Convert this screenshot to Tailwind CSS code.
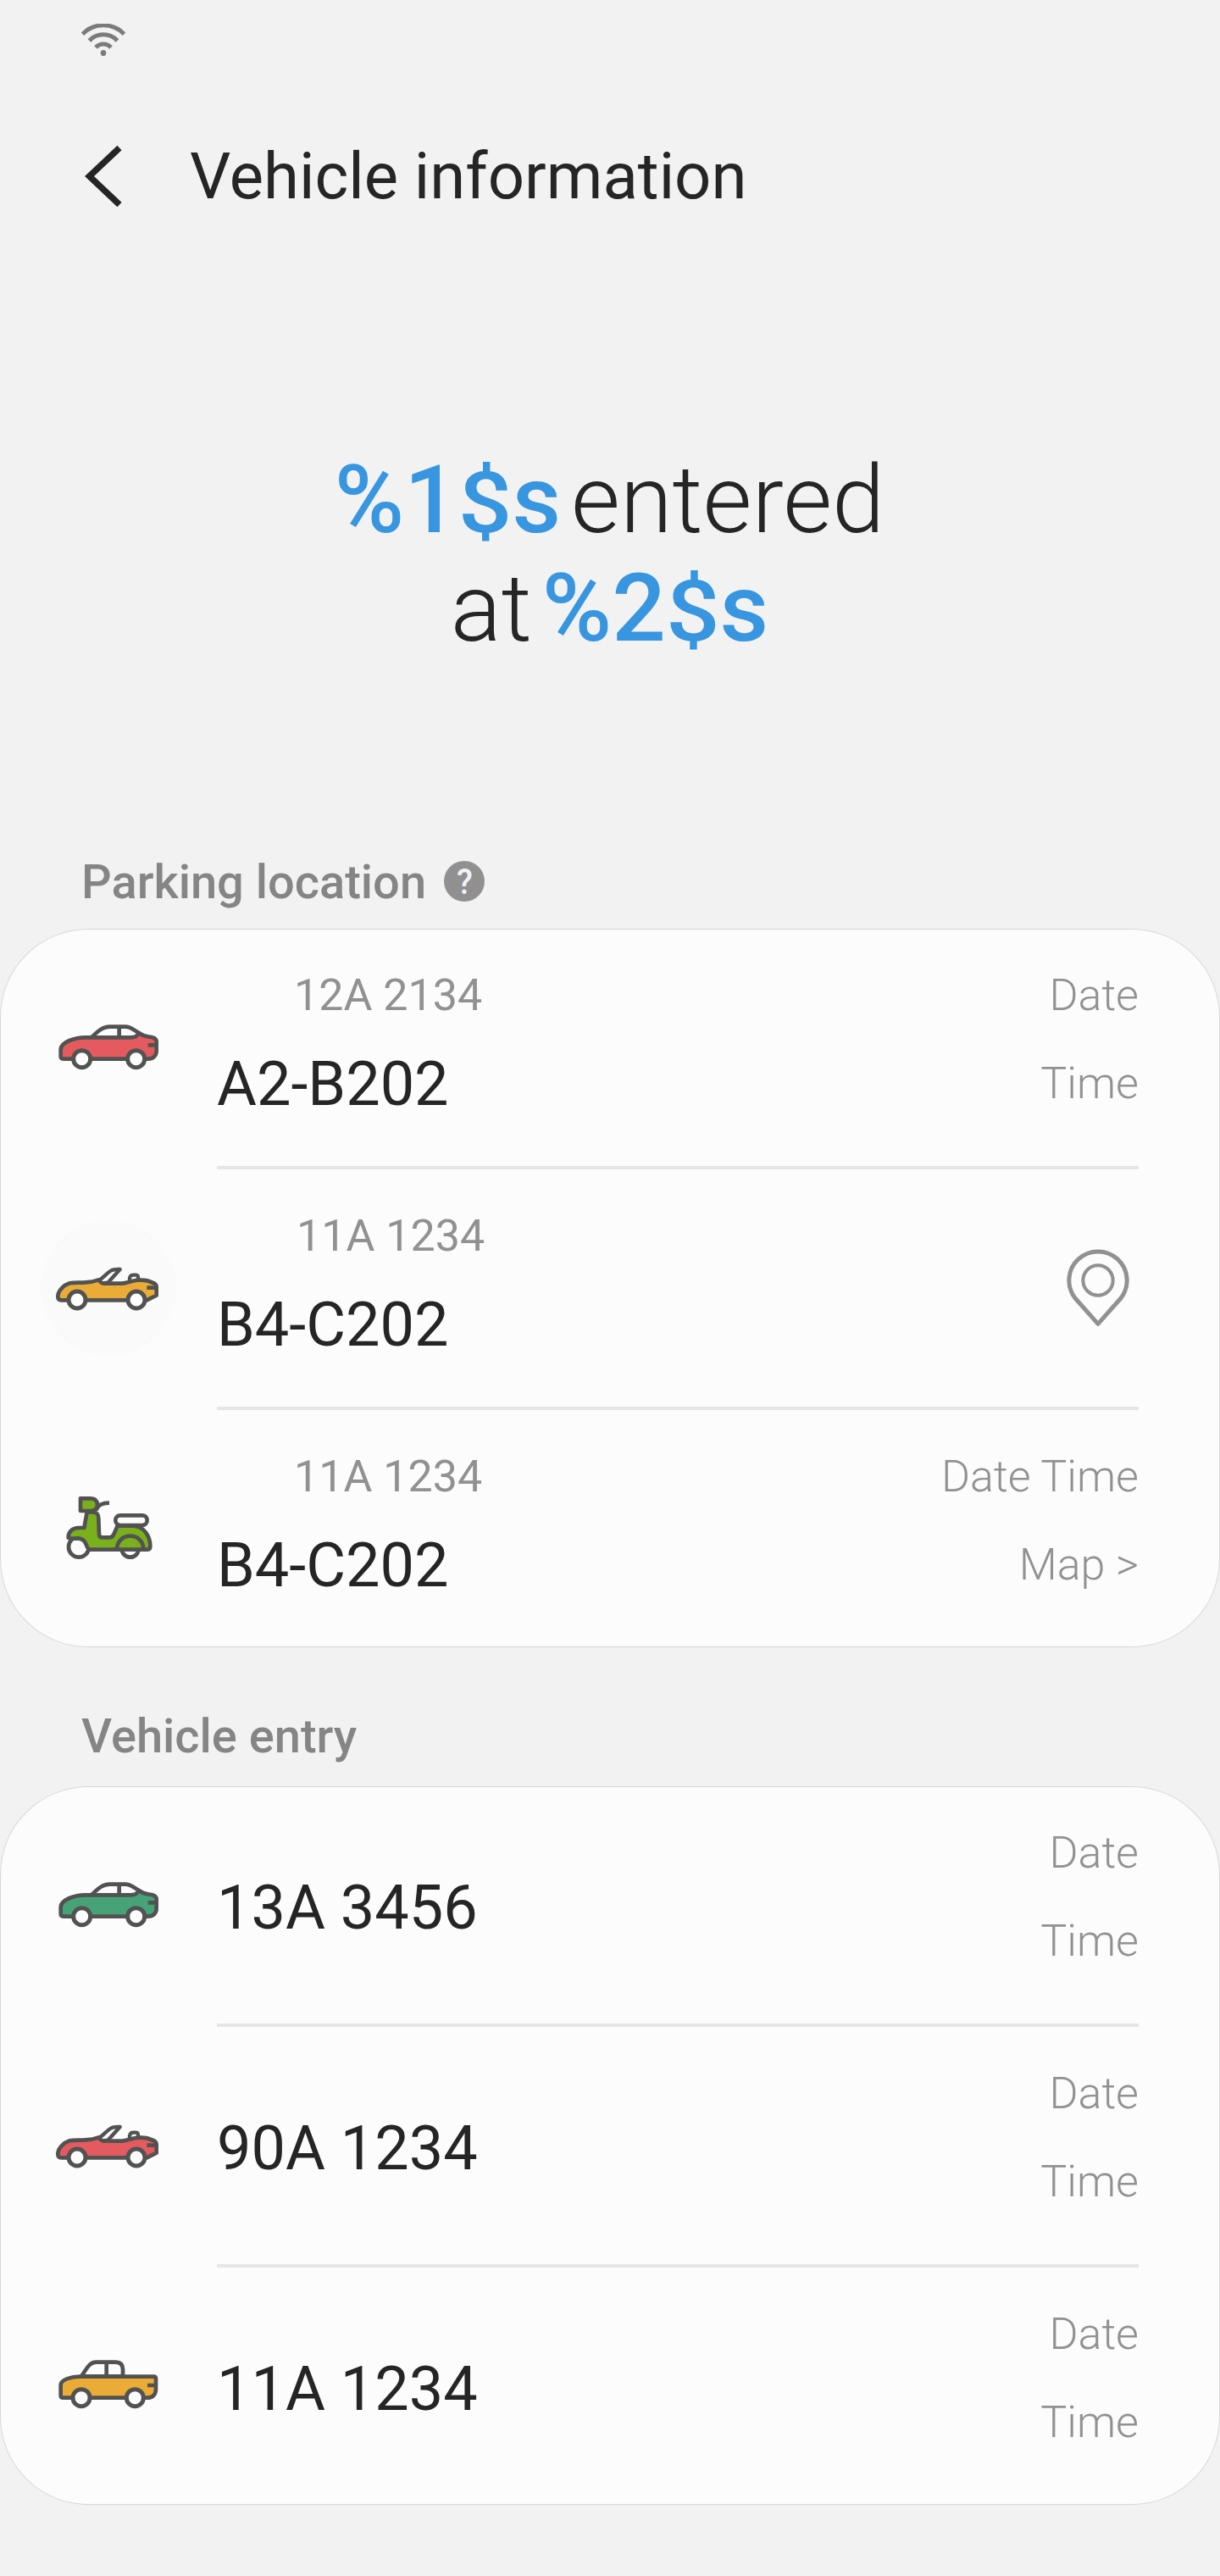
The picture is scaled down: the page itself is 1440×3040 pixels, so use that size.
<!DOCTYPE html>
<html lang="en">
<head>
<meta charset="utf-8">
<title>Vehicle information</title>
<script src="https://cdn.jsdelivr.net/npm/@tailwindcss/browser@4"></script>
</head>
<body class="bg-[#f2f2f2] font-['Roboto',sans-serif] text-[#252525]">
<svg class="hidden">
  <symbol id="sedan" viewBox="-6 -102 480 480">
    <g stroke="#525252" stroke-width="14" stroke-linejoin="round">
      <path fill="#fcfcfc" d="M172 104 C196 82 212 65 238 65 H293 C316 65 326 79 345 89 L330 106 Z"/>
      <path fill="currentColor" d="M65 170 V146 C65 118 118 103 152 103 H312 C328 103 335 100 341 87 C355 97 370 100 387 102 C397 104 404 107 404 118 V150 C404 168 392 179 374 179 H78 C69 179 65 176 65 170 Z"/>
      <path fill="none" d="M272 66 V103 M374 130 H404"/>
      <circle cx="140" cy="179" r="30" fill="#fcfcfc" stroke-width="15"/>
      <circle cx="332" cy="179" r="30" fill="#fcfcfc" stroke-width="15"/>
    </g>
  </symbol>
  <symbol id="convertible" viewBox="24 30 480 480">
    <g stroke="#525252" stroke-width="14" stroke-linejoin="round" stroke-linecap="round">
      <path fill="#fcfcfc" stroke-width="13" d="M226 246 C246 235 258 216 274 208 C283 203 292 204 305 204 L262 251 L240 253 Z"/>
      <path fill="#fcfcfc" stroke-width="13" d="M339 243 C338 230 342 224 352 224 H361 C369 224 370 230 369 241"/>
      <path fill="currentColor" d="M85 300 C85 278 108 259 127 253 C146 249 165 252 183 250 C200 249 216 246 229 241 C235 249 240 254 249 254 H310 C332 254 345 243 372 242 C396 240 414 247 427 254 C431 257 434 261 434 266 V296 L400 313 H97 C89 313 85 308 85 300 Z"/>
      <path fill="none" stroke-linecap="butt" d="M400 269 H434"/>
      <circle cx="153" cy="312" r="30" fill="#fcfcfc" stroke-width="15"/>
      <circle cx="363" cy="312" r="30" fill="#fcfcfc" stroke-width="15"/>
    </g>
  </symbol>
  <symbol id="pickup" viewBox="-6 -102 480 480">
    <g stroke="#525252" stroke-width="14" stroke-linejoin="round">
      <path fill="#fcfcfc" d="M138 103 C155 80 165 53 190 53 H260 C278 53 285 64 285 80 V103 Z"/>
      <path fill="currentColor" d="M65 172 V134 C65 114 104 104 134 104 H394 C400 104 402 106 402 112 V148 C402 168 390 179 372 179 H73 C67 179 65 177 65 172 Z"/>
      <path fill="none" d="M227 54 V103 M372 135 H402"/>
      <circle cx="138" cy="179" r="30" fill="#fcfcfc" stroke-width="15"/>
      <circle cx="328" cy="179" r="30" fill="#fcfcfc" stroke-width="15"/>
    </g>
  </symbol>
  <symbol id="scooter" viewBox="-36 -78 480 480">
    <g stroke="#525252" stroke-width="14" stroke-linejoin="round">
      <circle cx="281" cy="233" r="30" fill="#fcfcfc"/>
      <circle cx="99" cy="227" r="36" fill="#fcfcfc"/>
      <path fill="none" d="M160 98 C165 78 180 71 207 71"/>
      <path fill="currentColor" d="M128 103 H148 C164 103 169 112 169 128 L171 182 C171 190 175 193 182 193 H208 C216 193 220 190 223 182 L236 152 H290 C330 152 352 190 352 224 C352 232 348 236 340 236 H138 C124 236 130 198 96 196 C82 196 72 200 62 194 C62 172 78 159 98 159 H118 Z"/>
      <path fill="currentColor" d="M105 55 H140 C157 55 165 64 165 77 C165 90 157 99 142 99 H105 Z"/>
      <rect x="229" y="115" width="112" height="35" rx="17" fill="#fcfcfc"/>
      <path fill="currentColor" d="M234 236 C234 172 328 172 328 236 Z"/>
    </g>
  </symbol>
</svg>

<div class="flex h-[3040px] w-[1440px] flex-col overflow-hidden">
  <div class="flex h-24 shrink-0 items-center px-24 pb-0.5">
    <svg class="h-[38px] w-[52px]" viewBox="96 28 52 38" fill="none" stroke="#7b7b7b" stroke-width="5">
      <path d="M97.5 40.2 A34 34 0 0 1 146.500 40.200"/>
      <path d="M105.500 48 A22.500 22.500 0 0 1 138.500 48"/>
      <path d="M113 56 A12 12 0 0 1 131 56"/>
      <ellipse cx="122" cy="62.500" rx="3.300" ry="3.600" fill="#7b7b7b" stroke="none"/>
    </svg>
  </div>

  <header class="flex h-56 shrink-0 items-center pl-24">
    <svg class="h-[72px] w-[52px] shrink-0" viewBox="96 172 52 72" fill="none" stroke="#252525" stroke-width="7.500">
      <path d="M141 174.500 L105.500 208 L141 241.500"/>
    </svg>
    <h1 class="ml-[76px] text-[76px] leading-[96px]">Vehicle information</h1>
  </header>

  <section class="flex h-[672px] shrink-0 flex-col items-center pt-[206px] text-[112px] leading-[128px] font-light">
    <p class="flex gap-3 pr-px"><b class="font-medium text-[#3895df]">%1<span class="inline-block translate-y-[4px] scale-y-[0.89]">$</span>s</b><span>entered</span></p>
    <p class="flex gap-3 pr-px"><span>at</span><b class="font-medium text-[#3895df]">%2<span class="inline-block translate-y-[4px] scale-y-[0.89]">$</span>s</b></p>
  </section>

  <div class="flex h-[104px] shrink-0 items-center gap-[21px] pb-2 pl-24 text-[56px] font-medium text-[#858585]">
    <h2 class="pt-px leading-[96px]">Parking location</h2>
    <span class="flex size-12 items-center justify-center rounded-full bg-[#909090] text-[43px] leading-[48px] font-medium text-[#f2f2f2]"><span class="scale-x-90">?</span></span>
  </div>

  <section class="flex h-[848px] shrink-0 flex-col rounded-[104px] bg-[#fcfcfc] shadow-[inset_0_0_0_1px_#d6d6d6]">
    <div class="flex h-[284px]">
      <div class="flex h-[280px] w-64 items-center justify-center text-[#e55a5e]"><svg class="size-40"><use href="#sedan"/></svg></div>
      <div class="mr-24 flex flex-1 justify-between border-b-4 border-[#e6e6e6] pt-[27px]">
        <div><p class="pl-[91px] text-[52px] leading-[104px] text-[#919191]">12A 2134</p><p class="text-[72px] leading-[105px]">A2-B202</p></div>
        <div class="text-right text-[52px] leading-[104px] font-light text-[#919191]"><p>Date</p><p>Time</p></div>
      </div>
    </div>
    <div class="flex h-[284px]">
      <div class="flex h-[280px] w-64 items-center justify-center text-[#eaac37]"><svg class="size-40 rounded-full bg-[#fafafa]"><use href="#convertible"/></svg></div>
      <div class="mr-24 flex flex-1 justify-between border-b-4 border-[#e6e6e6] pt-[27px]">
        <div><p class="pl-[94px] text-[52px] leading-[104px] text-[#919191]">11A 1234</p><p class="text-[72px] leading-[105px]">B4-C202</p></div>
        <svg class="mt-[65px] size-24" viewBox="504 1176 288 288" fill="none" stroke="#919191" stroke-linejoin="round">
          <path stroke-width="15" d="M648 1447 L567 1356 A102.500 102.500 0 1 1 729 1356 Z"/>
          <circle cx="648" cy="1293" r="53" stroke-width="12"/>
        </svg>
      </div>
    </div>
    <div class="flex h-[280px]">
      <div class="flex h-[280px] w-64 items-center justify-center text-[#7ab01c]"><svg class="size-40"><use href="#scooter"/></svg></div>
      <div class="mr-24 flex flex-1 justify-between pt-[27px]">
        <div><p class="pl-[91px] text-[52px] leading-[104px] text-[#919191]">11A 1234</p><p class="text-[72px] leading-[105px]">B4-C202</p></div>
        <div class="text-right text-[52px] leading-[104px] font-light text-[#919191]"><p>Date Time</p><p>Map &gt;</p></div>
      </div>
    </div>
  </section>

  <div class="flex h-[164px] shrink-0 items-center pt-[46px] pl-24 text-[56px] font-medium text-[#858585]">
    <h2 class="leading-[96px]">Vehicle entry</h2>
  </div>

  <section class="flex h-[848px] shrink-0 flex-col rounded-[104px] bg-[#fcfcfc] shadow-[inset_0_0_0_1px_#d6d6d6]">
    <div class="flex h-[284px]">
      <div class="flex h-[280px] w-64 items-center justify-center text-[#47a377]"><svg class="size-40"><use href="#sedan"/></svg></div>
      <div class="mr-24 flex flex-1 justify-between border-b-4 border-[#e6e6e6] pt-[27px]">
        <p class="pt-[61px] text-[72px] leading-[111px]">13A 3456</p>
        <div class="text-right text-[52px] leading-[104px] font-light text-[#919191]"><p>Date</p><p>Time</p></div>
      </div>
    </div>
    <div class="flex h-[284px]">
      <div class="flex h-[280px] w-64 items-center justify-center text-[#e55a5e]"><svg class="size-40"><use href="#convertible"/></svg></div>
      <div class="mr-24 flex flex-1 justify-between border-b-4 border-[#e6e6e6] pt-[27px]">
        <p class="pt-[61px] text-[72px] leading-[111px]">90A 1234</p>
        <div class="text-right text-[52px] leading-[104px] font-light text-[#919191]"><p>Date</p><p>Time</p></div>
      </div>
    </div>
    <div class="flex h-[280px]">
      <div class="flex h-[280px] w-64 items-center justify-center text-[#eaac37]"><svg class="size-40"><use href="#pickup"/></svg></div>
      <div class="mr-24 flex flex-1 justify-between pt-[27px]">
        <p class="pt-[61px] text-[72px] leading-[111px]">11A 1234</p>
        <div class="text-right text-[52px] leading-[104px] font-light text-[#919191]"><p>Date</p><p>Time</p></div>
      </div>
    </div>
  </section>
</div>
</body>
</html>
